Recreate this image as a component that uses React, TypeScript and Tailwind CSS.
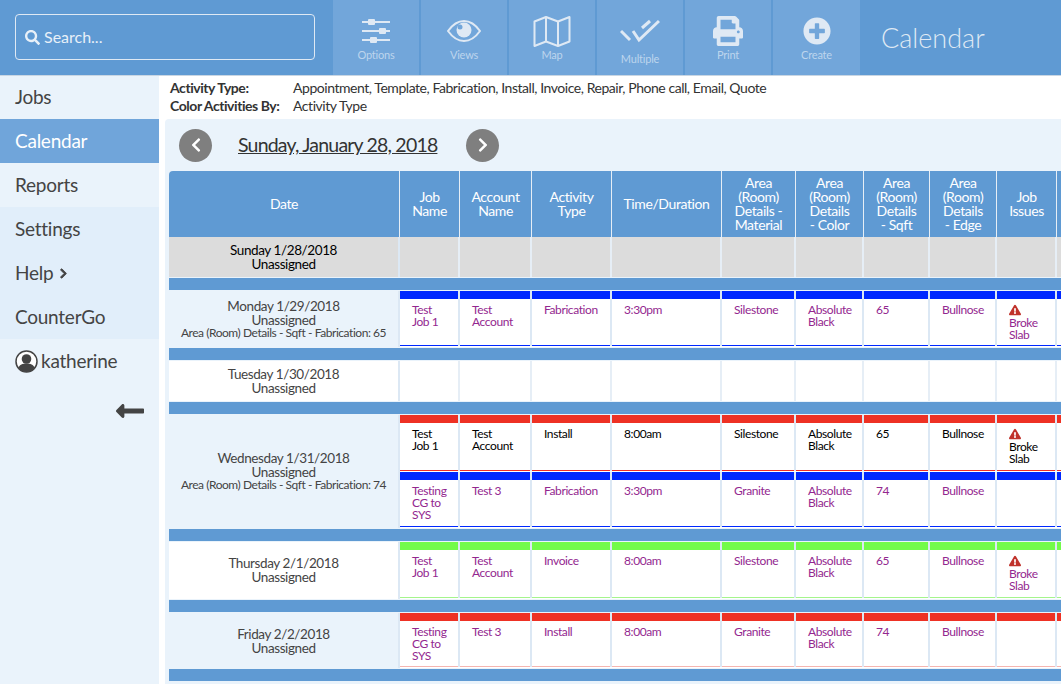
import { FaChevronLeft, FaChevronRight, FaExclamationTriangle, FaLongArrowAltLeft, FaPlusCircle, FaPrint, FaSearch } from "react-icons/fa";

const SIDE_COLS = "grid grid-cols-[60px_72px_80px_110px_74px_68px_66px_67px_60px_40px]";

const HEADERS = [
  ["Job", "Name"],
  ["Account", "Name"],
  ["Activity", "Type"],
  ["Time/Duration"],
  ["Area", "(Room)", "Details -", "Material"],
  ["Area", "(Room)", "Details", "- Color"],
  ["Area", "(Room)", "Details", "- Sqft"],
  ["Area", "(Room)", "Details", "- Edge"],
  ["Job", "Issues"],
  [""],
];

interface Activity {
  color: string;
  line: string;
  text: string;
  height: string;
  job: string[];
  account: string[];
  type: string;
  time: string;
  material: string;
  stone: string[];
  sqft: string;
  edge: string;
  issue?: boolean;
}

interface DayRow {
  title: string;
  note?: string;
  bg: string;
  height: string;
  activities: Activity[];
}

const PURPLE = "text-[#93278f]";
const RED = "bg-[#ee3124]";
const BLUE = "bg-[#0028ff]";
const GREEN = "bg-[#73fb4a]";

const DAYS: DayRow[] = [
  {
    title: "Monday 1/29/2018",
    note: "Area (Room) Details - Sqft - Fabrication: 65",
    bg: "bg-[#eaf3fb]",
    height: "h-[56px]",
    activities: [
      { color: BLUE, line: "bg-[#0028ff]", text: PURPLE, height: "h-[56px]", job: ["Test", "Job 1"], account: ["Test", "Account"], type: "Fabrication", time: "3:30pm", material: "Silestone", stone: ["Absolute", "Black"], sqft: "65", edge: "Bullnose", issue: true },
    ],
  },
  { title: "Tuesday 1/30/2018", bg: "bg-white", height: "h-[40px]", activities: [] },
  {
    title: "Wednesday 1/31/2018",
    note: "Area (Room) Details - Sqft - Fabrication: 74",
    bg: "bg-[#eaf3fb]",
    height: "h-[113px] pb-[2px]",
    activities: [
      { color: RED, line: "bg-[#ee3124]", text: "text-black", height: "h-[57px]", job: ["Test", "Job 1"], account: ["Test", "Account"], type: "Install", time: "8:00am", material: "Silestone", stone: ["Absolute", "Black"], sqft: "65", edge: "Bullnose", issue: true },
      { color: BLUE, line: "bg-[#0028ff]", text: PURPLE, height: "h-[56px]", job: ["Testing", "CG to", "SYS"], account: ["Test 3"], type: "Fabrication", time: "3:30pm", material: "Granite", stone: ["Absolute", "Black"], sqft: "74", edge: "Bullnose" },
    ],
  },
  {
    title: "Thursday 2/1/2018",
    bg: "bg-white",
    height: "h-[57px] pb-[2px]",
    activities: [
      { color: GREEN, line: "bg-[#a5f58c]", text: PURPLE, height: "h-[57px]", job: ["Test", "Job 1"], account: ["Test", "Account"], type: "Invoice", time: "8:00am", material: "Silestone", stone: ["Absolute", "Black"], sqft: "65", edge: "Bullnose", issue: true },
    ],
  },
  {
    title: "Friday 2/2/2018",
    bg: "bg-[#eaf3fb]",
    height: "h-[55px]",
    activities: [
      { color: RED, line: "bg-[#f5b5b0]", text: PURPLE, height: "h-[55px]", job: ["Testing", "CG to", "SYS"], account: ["Test 3"], type: "Install", time: "8:00am", material: "Granite", stone: ["Absolute", "Black"], sqft: "74", edge: "Bullnose" },
    ],
  },
];

function SlidersIcon() {
  return (
    <svg width="30" height="24" viewBox="0 0 30 24" className="text-[#dfe9f4]" fill="currentColor">
      <rect x="1" y="2" width="28" height="2" />
      <rect x="1" y="11" width="28" height="2" />
      <rect x="1" y="20" width="28" height="2" />
      <rect x="7" y="0" width="7" height="6" rx="1" />
      <rect x="18" y="9" width="7" height="6" rx="1" />
      <rect x="9" y="18" width="7" height="6" rx="1" />
    </svg>
  );
}

function EyeIcon() {
  return (
    <svg width="34" height="22" viewBox="0 0 34 22" className="text-[#dfe9f4]" fill="none" stroke="currentColor" strokeWidth="2">
      <path d="M1 11C6 4 11 1 17 1s11 3 16 10c-5 7-10 10-16 10S6 18 1 11z" />
      <circle cx="17" cy="10" r="7.5" fill="currentColor" stroke="none" />
      <circle cx="13" cy="7" r="2.5" fill="#72a6da" stroke="none" />
    </svg>
  );
}

function MapIcon() {
  return (
    <svg width="38" height="33" viewBox="0 0 38 33" className="text-[#dfe9f4]" fill="none" stroke="currentColor" strokeWidth="2" strokeLinejoin="round">
      <path d="M1.5 6.5 13 2l12 4.5L36.5 2v24.500L25 31l-12-4.500L1.500 31z" />
      <path d="M13 2v24.500M25 6.500V31" />
    </svg>
  );
}

function ChecksIcon() {
  return (
    <svg width="40" height="25" viewBox="0 0 40 25" className="text-[#dfe9f4]" fill="none" stroke="currentColor" strokeWidth="3">
      <path d="M1 12l9 9" />
      <path d="M13 12l6 9L39 2" />
      <path d="M22 9l8-7" />
    </svg>
  );
}

function UserIcon() {
  return (
    <svg width="23" height="23" viewBox="0 0 23 23" className="shrink-0">
      <circle cx="11.500" cy="11.500" r="10.500" fill="#fff" stroke="#444" strokeWidth="1.500" />
      <circle cx="11.500" cy="9" r="4.800" fill="#444" />
      <path d="M3.500 18c1-3.500 4-4.500 8-4.500s7 1 8 4.500c-2 2.600-4.800 4-8 4s-6-1.400-8-4z" fill="#444" />
    </svg>
  );
}

function ToolButton({ label, icon, labelClass = "" }: { label: string; icon: React.ReactNode; labelClass?: string }) {
  return (
    <div className="flex h-full w-[88px] flex-col items-center border-r-2 border-[#5f9ad3] bg-[#72a6da] last:w-[87px] last:border-r-0">
      <div className="flex h-[48px] items-center justify-center pt-[14px]">{icon}</div>
      <span className={`text-[11px] leading-[13px] tracking-[-0.2px] text-[#bdd5ed] ${labelClass}`}>{label}</span>
    </div>
  );
}

function NavItem({ label, active, shaded, first }: { label: string; active?: boolean; shaded?: boolean; first?: boolean }) {
  return (
    <div
      className={`flex items-center pl-[15px] text-[19px] tracking-[-0.25px] ${first ? "h-[43px]" : "h-11"} ${
        active ? "bg-[#70a5da] text-white" : shaded ? "bg-[#e1eefa] text-[#444]" : "bg-[#eaf3fb] text-[#444]"
      }`}
    >
      {label}
      {label === "Help" && <FaChevronRight className="ml-[5px] stroke-current stroke-[40] text-[11px]" />}
    </div>
  );
}

function Lines({ lines }: { lines: string[] }) {
  return (
    <>
      {lines.map((l, i) => (
        <div key={i}>{l}</div>
      ))}
    </>
  );
}

function Cell({ children }: { children?: React.ReactNode }) {
  return <div className="h-full border-r-2 border-[#dce8f4] pl-3 pt-[5px]">{children}</div>;
}

function ActivityRow({ a }: { a: Activity }) {
  const cells: React.ReactNode[] = [
    <Lines lines={a.job} />,
    <Lines lines={a.account} />,
    a.type,
    a.time,
    a.material,
    <Lines lines={a.stone} />,
    a.sqft,
    a.edge,
    a.issue ? (
      <>
        <FaExclamationTriangle className="mb-[1px] text-[12px] text-[#c0322b]" />
        Broke
        <br />
        Slab
      </>
    ) : null,
    null,
  ];
  return (
    <div className={`${a.height} flex flex-col bg-white`}>
      <div className={`${SIDE_COLS} h-2 shrink-0`}>
        {cells.map((_, i) => (
          <div key={i} className={`${a.color} border-r-2 border-[#dce8f4]`} />
        ))}
      </div>
      <div className={`${SIDE_COLS} min-h-0 flex-1 text-[12px] leading-[12px] tracking-[-0.4px] ${a.text}`}>
        {cells.map((c, i) => (
          <Cell key={i}>{c}</Cell>
        ))}
      </div>
      <div className={`${SIDE_COLS} mb-[1px] h-[1px] shrink-0`}>
        {cells.map((_, i) => (
          <div key={i} className={`${a.line} border-r-2 border-[#dce8f4]`} />
        ))}
      </div>
    </div>
  );
}

function EmptyCells({ height }: { height: string }) {
  return (
    <div className={`${SIDE_COLS} ${height}`}>
      {HEADERS.map((_, i) => (
        <div key={i} className="border-r-2 border-[#e6eef6]" />
      ))}
    </div>
  );
}

function Separator() {
  return <div className="mt-[1px] h-[12px] w-[1000px] bg-[#5f9ad3]" />;
}

function DateCell({ title, note, bg, height, dark }: { title: string; note?: string; bg: string; height: string; dark?: boolean }) {
  return (
    <div className={`${bg} ${height} flex w-[231px] shrink-0 flex-col items-center justify-center border-r-2 border-[#dce8f4] text-center text-[13.5px] leading-[14px] tracking-[-0.4px] ${dark ? "text-black" : "text-[#444]"}`}>
      <div>{title}</div>
      <div>Unassigned</div>
      {note && <div className="text-[12px] leading-[12px] tracking-[-0.45px]">{note}</div>}
    </div>
  );
}

export default function App() {
  return (
    <div className="h-screen w-full overflow-hidden bg-white font-['Lato','Liberation_Sans',sans-serif]">
      <header className="flex h-[76px] border-b border-[#c9d6e3] bg-[#5f9ad3]">
        <div className="w-[333px] shrink-0 pl-[15px] pt-[14px]">
          <div className="flex h-[46px] w-[300px] items-center gap-[4px] rounded border border-[#dfe9f4] pl-[9px] text-[16px] text-[#e8f0f8]">
            <FaSearch className="text-[15px]" />
            Search...
          </div>
        </div>
        <div className="flex shrink-0">
          <ToolButton label="Options" icon={<SlidersIcon />} />
          <ToolButton label="Views" icon={<EyeIcon />} />
          <ToolButton label="Map" icon={<MapIcon />} />
          <ToolButton label="Multiple" icon={<ChecksIcon />} labelClass="mt-1" />
          <ToolButton label="Print" icon={<FaPrint className="text-[30px] text-[#dfe9f4]" />} />
          <ToolButton label="Create" icon={<FaPlusCircle className="text-[28px] text-[#dfe9f4]" />} />
        </div>
        <div className="pl-[21px] pt-[20px] text-[27px] font-light leading-9 text-[#dfe9f4]">Calendar</div>
      </header>

      <div className="flex h-[608px]">
        <aside className="w-[159px] shrink-0 bg-[#eaf3fb]">
          <NavItem label="Jobs" first />
          <NavItem label="Calendar" active />
          <NavItem label="Reports" />
          <NavItem label="Settings" shaded />
          <NavItem label="Help" shaded />
          <NavItem label="CounterGo" shaded />
          <div className="flex h-11 items-center gap-[3px] pl-[15px] text-[19px] tracking-[-0.25px] text-[#444]">
            <UserIcon />
            katherine
          </div>
          <div className="flex justify-end pr-[13px] pt-[12px]">
            <FaLongArrowAltLeft className="text-[32px] text-[#444]" />
          </div>
        </aside>

        <main className="min-w-0 flex-1">
          <div className="h-[43px] pl-[11px] pt-[3px] text-[14px] leading-[18px] tracking-[-0.45px] text-[#333]">
            <div className="flex">
              <span className="w-[123px] font-bold">Activity Type:</span>
              <span>Appointment, Template, Fabrication, Install, Invoice, Repair, Phone call, Email, Quote</span>
            </div>
            <div className="flex">
              <span className="w-[123px] font-bold">Color Activities By:</span>
              <span>Activity Type</span>
            </div>
          </div>

          <div className="ml-[6px] h-[565px] overflow-hidden rounded-tl bg-[#eaf3fb] pl-1">
            <div className="flex h-[52px] items-center pl-[10px]">
              <div className="flex h-[33px] w-[33px] items-center justify-center rounded-full bg-[#7f7f7f] text-white">
                <FaChevronLeft className="text-[16px]" />
              </div>
              <span className="ml-[26px] w-[200px] whitespace-nowrap text-[19.5px] tracking-[-0.8px] text-[#333] underline">Sunday, January 28, 2018</span>
              <div className="ml-[28px] flex h-[33px] w-[33px] items-center justify-center rounded-full bg-[#7f7f7f] text-white">
                <FaChevronRight className="text-[16px]" />
              </div>
            </div>

            <div className="w-[1000px]">
              {/* column titles */}
              <div className="flex h-[66px] rounded-tl bg-[#5f9ad3] text-[14px] leading-[14px] tracking-[-0.4px] text-white">
                <div className="flex w-[231px] shrink-0 items-center justify-center border-r border-[#e6eef6]">Date</div>
                <div className={SIDE_COLS}>
                  {HEADERS.map((h, i) => (
                    <div key={i} className="flex flex-col items-center justify-center border-r border-[#e6eef6] text-center">
                      <Lines lines={h} />
                    </div>
                  ))}
                </div>
              </div>

              <div className="flex">
                <DateCell title="Sunday 1/28/2018" bg="bg-[#dcdcdc]" height="h-[40px]" dark />
                <div className="bg-[#dcdcdc]">
                  <EmptyCells height="h-[40px]" />
                </div>
              </div>

              {DAYS.map((day) => (
                <div key={day.title}>
                  <Separator />
                  <div className="mt-[1px] flex">
                    <DateCell title={day.title} note={day.note} bg={day.bg} height={day.height} />
                    <div className="bg-white">
                      {day.activities.length === 0 && <EmptyCells height={day.height} />}
                      {day.activities.map((a, i) => (
                        <ActivityRow key={i} a={a} />
                      ))}
                    </div>
                  </div>
                </div>
              ))}
              <Separator />
            </div>
          </div>
        </main>
      </div>
    </div>
  );
}
